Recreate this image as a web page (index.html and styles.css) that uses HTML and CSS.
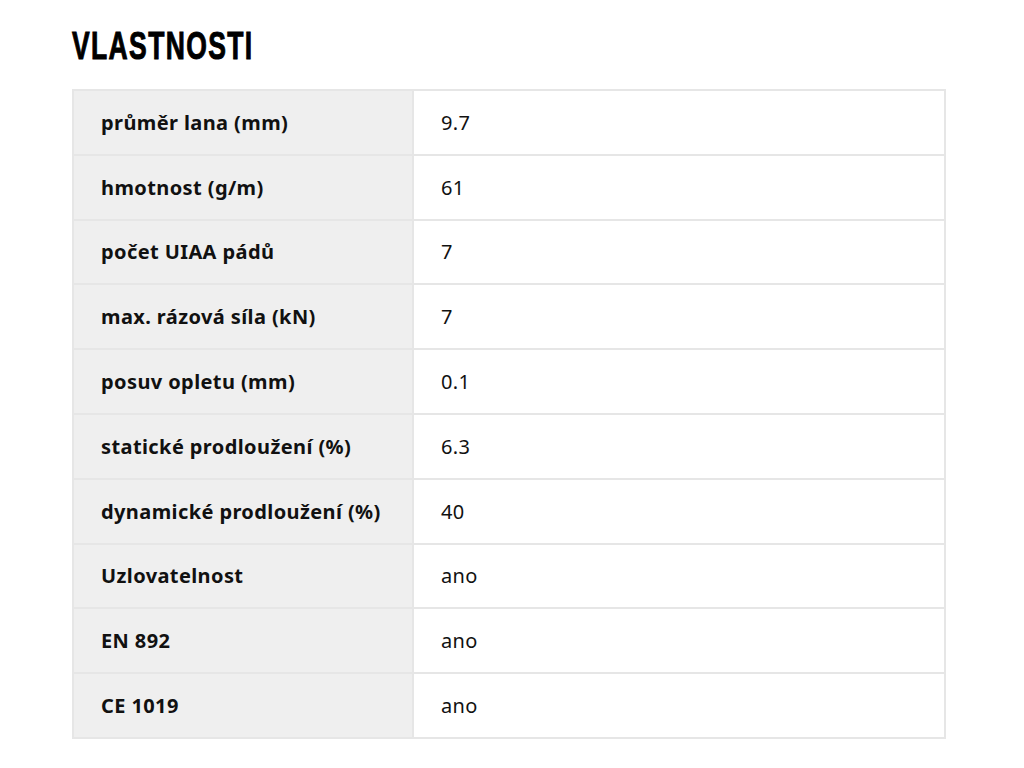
FILE: index.html
```html
<!DOCTYPE html>
<html lang="cs">
<head>
<meta charset="utf-8">
<title>Vlastnosti</title>
<link rel="stylesheet" href="styles.css">
</head>
<body>
<section class="props">
  <h2 class="props-title"><span class="props-title-text">VLASTNOSTI</span></h2>
  <table class="props-table">
    <tbody>
      <tr><th>průměr lana (mm)</th><td>9.7</td></tr>
      <tr><th>hmotnost (g/m)</th><td>61</td></tr>
      <tr><th>počet UIAA pádů</th><td>7</td></tr>
      <tr><th>max. rázová síla (kN)</th><td>7</td></tr>
      <tr><th>posuv opletu (mm)</th><td>0.1</td></tr>
      <tr><th>statické prodloužení (%)</th><td>6.3</td></tr>
      <tr><th>dynamické prodloužení (%)</th><td>40</td></tr>
      <tr><th>Uzlovatelnost</th><td>ano</td></tr>
      <tr><th>EN 892</th><td>ano</td></tr>
      <tr><th>CE 1019</th><td>ano</td></tr>
    </tbody>
  </table>
</section>
</body>
</html>
```
FILE: styles.css
```css
html, body {
  margin: 0;
  padding: 0;
  background: #ffffff;
}
body {
  font-family: "Noto Sans", "Open Sans", sans-serif;
  color: #111111;
}
.props {
  padding: 24px 78px 0 72px;
}
.props-title {
  margin: 0 0 22px 0;
  font-family: "Liberation Sans", "DejaVu Sans", sans-serif;
  font-weight: 700;
  font-size: 39px;
  line-height: 43px;
  color: #000000;
}
.props-title-text {
  display: inline-block;
  transform: scaleX(0.68);
  transform-origin: left center;
  letter-spacing: 2px;
  -webkit-text-stroke: 1px #000000;
}
.props-table {
  width: 874px;
  border-collapse: collapse;
  border: 2px solid #e6e6e6;
}
.props-table tr {
  height: 64.8px;
}
.props-table th,
.props-table td {
  border: 2px solid #e6e6e6;
  padding: 0 0 0 27px;
  text-align: left;
  vertical-align: middle;
  font-size: 20px;
}
.props-table th {
  width: 311px;
  background: #efefef;
  font-weight: 700;
  letter-spacing: 0.4px;
}
.props-table td {
  background: #ffffff;
  font-weight: 400;
  letter-spacing: 0.3px;
}
```
